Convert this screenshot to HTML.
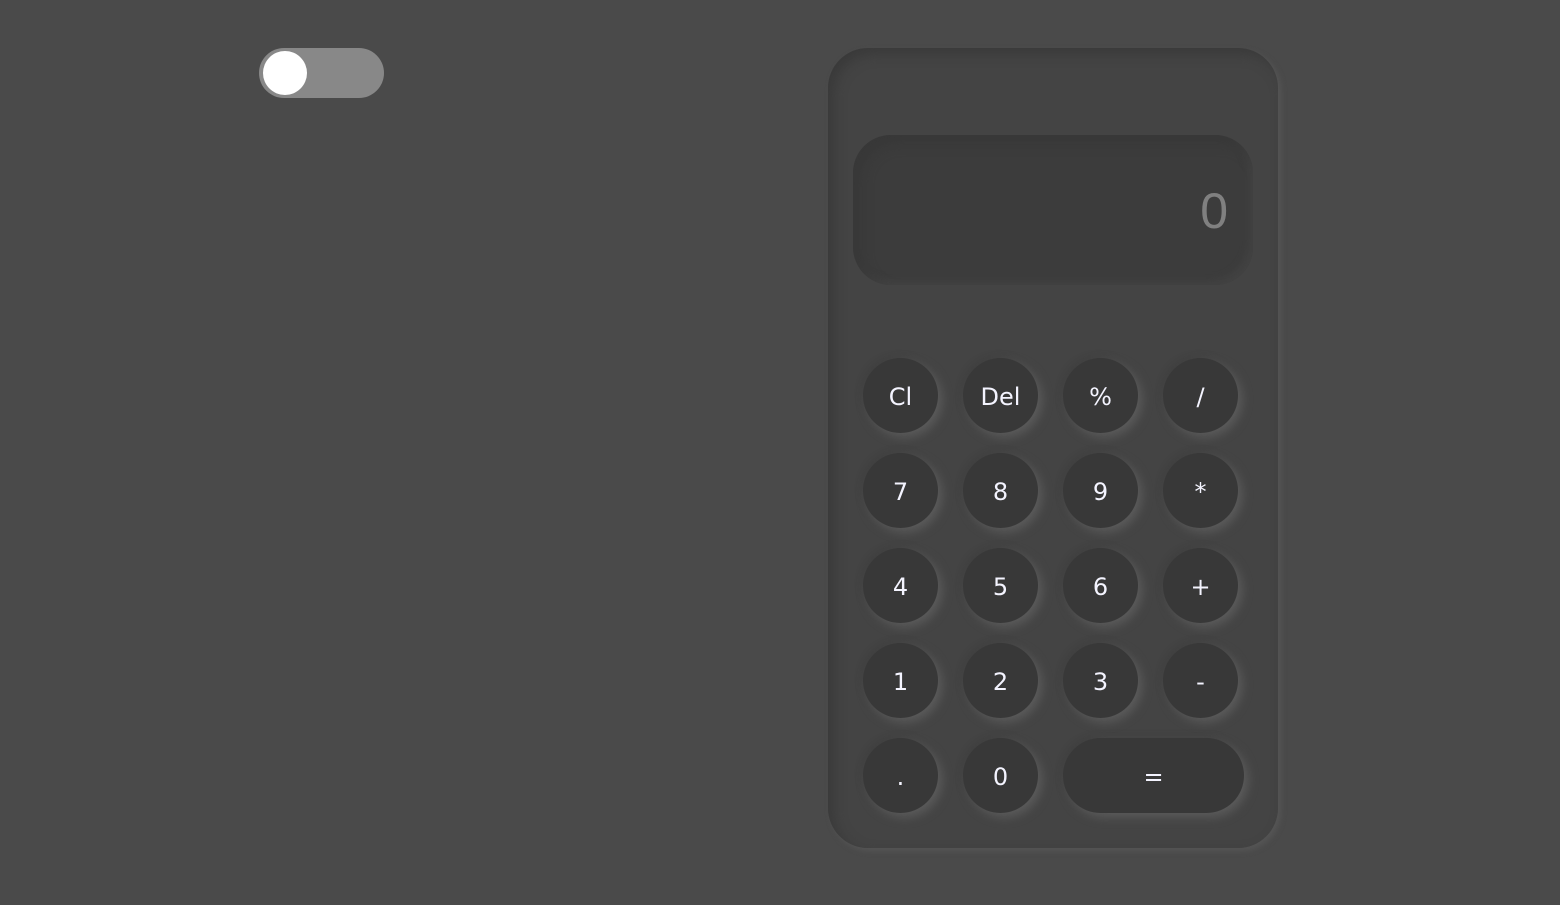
<!DOCTYPE html>
<html><head><style>
body{margin:0;width:1560px;height:905px;background:#4a4a4a;position:relative;overflow:hidden;font-family:"DejaVu Sans","Liberation Sans",sans-serif}
.tog{position:absolute;left:259px;top:48px;width:125px;height:50px;border-radius:25px;background:#888}
.tog::after{content:"";position:absolute;left:4px;top:3px;width:44px;height:44px;border-radius:50%;background:#fff}
.calc{position:absolute;left:828px;top:48px;width:450px;height:800px;border-radius:40px;background:#444;box-shadow:inset 6px 6px 12px #3a3a3a,3px 3px 6px #555}
.disp{position:absolute;left:25px;top:87px;width:400px;height:150px;border-radius:38px;background:#3c3c3c;box-shadow:inset 8px 8px 12px #383838,inset -4px -4px 8px #444;color:#808080;font-family:"Liberation Sans",sans-serif;font-size:50px;text-align:right;box-sizing:border-box;padding-right:25px;line-height:152px}
.b{position:absolute;width:75px;height:75px;border-radius:38px;background:#383838;color:#f4f4ff;font-size:24px;text-align:center;line-height:78px;box-shadow:4px 4px 10px #5c5c5c,-2px -2px 6px #3e3e3e}
</style></head><body>
<div class="tog"></div>
<div class="calc"><div class="disp">0</div></div>
<div class="b" style="left:863px;top:358px">Cl</div>
<div class="b" style="left:963px;top:358px">Del</div>
<div class="b" style="left:1063px;top:358px">%</div>
<div class="b" style="left:1163px;top:358px">/</div>
<div class="b" style="left:863px;top:453px">7</div>
<div class="b" style="left:963px;top:453px">8</div>
<div class="b" style="left:1063px;top:453px">9</div>
<div class="b" style="left:1163px;top:453px">*</div>
<div class="b" style="left:863px;top:548px">4</div>
<div class="b" style="left:963px;top:548px">5</div>
<div class="b" style="left:1063px;top:548px">6</div>
<div class="b" style="left:1163px;top:548px">+</div>
<div class="b" style="left:863px;top:643px">1</div>
<div class="b" style="left:963px;top:643px">2</div>
<div class="b" style="left:1063px;top:643px">3</div>
<div class="b" style="left:1163px;top:643px">-</div>
<div class="b" style="left:863px;top:738px">.</div>
<div class="b" style="left:963px;top:738px">0</div>
<div class="b" style="left:1063px;top:738px;width:181px">=</div>
</body></html>
